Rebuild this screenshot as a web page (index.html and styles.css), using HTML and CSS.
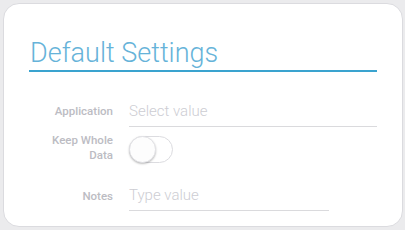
FILE: index.html
```html
<!DOCTYPE html>
<html>
<head>
<meta charset="utf-8">
<link rel="stylesheet" href="styles.css">
</head>
<body>
<div class="card">
  <div class="title-wrap">
    <h1 class="title">Default Settings</h1>
  </div>
  <div class="form">
    <div class="row">
      <div class="label">Application</div>
      <div class="field wide"><span class="placeholder">Select value</span></div>
    </div>
    <div class="row toggle-row">
      <div class="label">Keep Whole<br>Data</div>
      <div class="toggle"><span class="knob"></span></div>
    </div>
    <div class="row notes-row">
      <div class="label">Notes</div>
      <div class="field narrow"><span class="placeholder">Type value</span></div>
    </div>
  </div>
</div>
</body>
</html>
```
FILE: styles.css
```css
html, body {
  margin: 0;
  padding: 0;
}
body {
  width: 405px;
  height: 230px;
  background: #ebebed;
  font-family: Roboto, "Liberation Sans", sans-serif;
  padding: 3px 2px 0 3px;
  box-sizing: border-box;
}
.card {
  box-sizing: border-box;
  width: 400px;
  height: 224px;
  background: #fff;
  border: 1px solid #dbdbdf;
  border-radius: 16px;
  padding: 33px 25px 0 25px;
}
.title-wrap {
  height: 35px;
  box-sizing: border-box;
  border-bottom: 2px solid #3aa3cf;
}
.title {
  margin: 0;
  font-weight: 300;
  font-size: 27px;
  line-height: 32px;
  color: #66b3d9;
  padding-left: 1px;
}
.form {
  margin-top: 20px;
  display: flex;
  flex-direction: column;
}
.row {
  display: grid;
  grid-template-columns: 84px 1fr;
  column-gap: 16px;
  align-items: start;
}
.label {
  text-align: right;
  font-size: 11.5px;
  font-weight: 500;
  line-height: 14px;
  color: #bcbcc3;
  padding-top: 12px;
}
.field {
  height: 35px;
  border-bottom: 1px solid #dadadd;
  box-sizing: border-box;
  padding-top: 9px;
}
.field.narrow {
  width: 200px;
  height: 34px;
  padding-top: 8px;
}
.notes-row .label {
  padding-top: 12px;
}
.placeholder {
  font-size: 15px;
  font-weight: 300;
  color: #cdcdd3;
  line-height: 20px;
}
.toggle-row {
  margin-top: 9px;
  height: 41px;
}
.toggle-row .label {
  padding-top: 0;
  margin-top: -3px;
  line-height: 15px;
}
.toggle {
  box-sizing: border-box;
  width: 44px;
  height: 27px;
  border: 1px solid #dcdce0;
  border-radius: 14px;
  background: #fff;
  position: relative;
}
.knob {
  position: absolute;
  left: -1px;
  top: -1px;
  width: 27px;
  height: 27px;
  box-sizing: border-box;
  border-radius: 50%;
  background: #fdfdfd;
  border: 1px solid #e2e2e6;
  box-shadow: 0 1px 2px rgba(0,0,0,0.25);
}
```
